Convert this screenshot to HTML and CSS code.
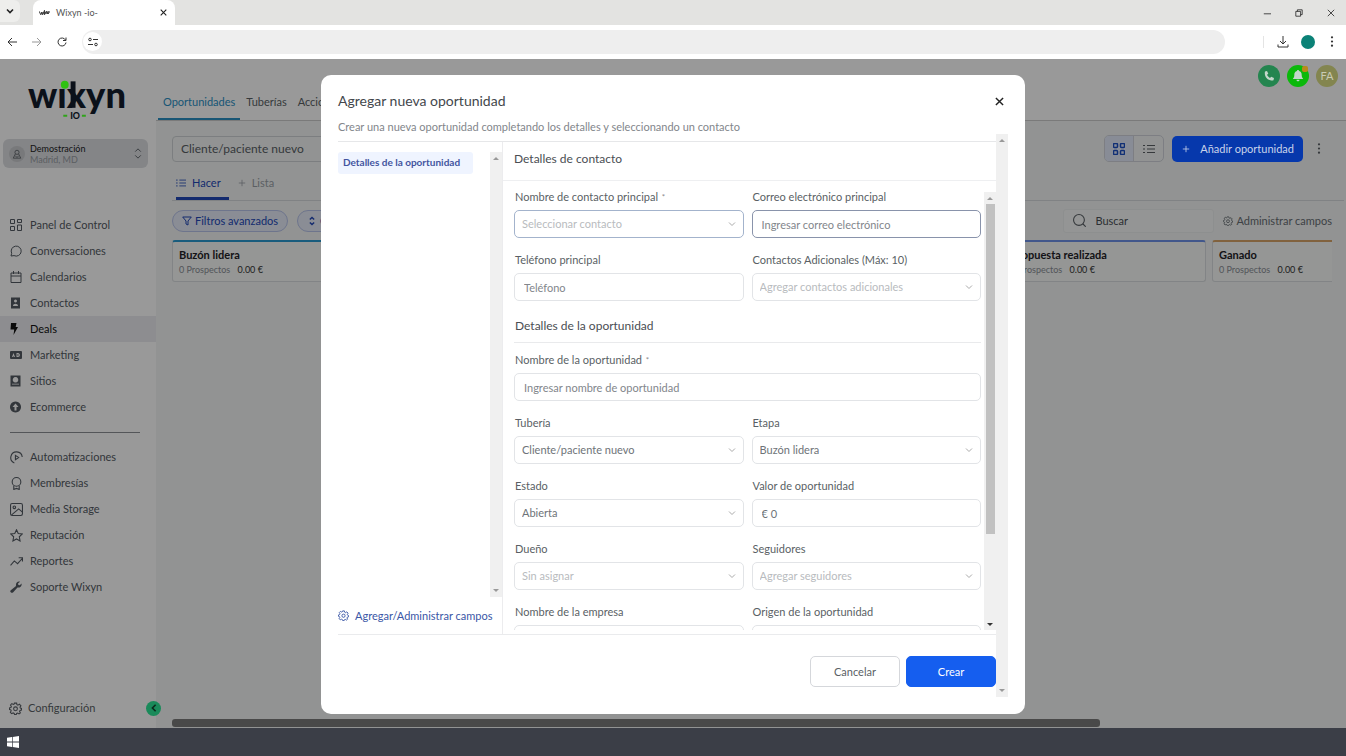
FILE: index.html
```html
<!DOCTYPE html>
<html lang="es">
<head>
<meta charset="utf-8">
<title>Wixyn -io-</title>
<link rel="stylesheet" href="styles.css">
</head>
<body>
<svg class="sprite" aria-hidden="true">
  <symbol id="gear" viewBox="0 0 24 24"><path d="M10 2h4l.7 3 1.8.8L19.200 4 22 7l-1.700 2.500.7 1.800 2 .7v3l-2.700.7-.8 1.800L21 20l-2.500 2-2.700-1.500-1.800.7-.7 2h-3l-.7-2.300-2-.8L5 21.500 2.500 19 4 16.300l-.7-1.800-2.300-.7v-3l2.500-.7.8-1.900L2.800 5.500 5.300 3l2.500 1.500 1.700-.7z"/><circle cx="12" cy="12.500" r="3.500"/></symbol>
  <symbol id="chev" viewBox="0 0 10 10"><path d="M2 3.500l3 3 3-3"/></symbol>
  <symbol id="cross" viewBox="0 0 10 10"><path d="M1 1l8 8M9 1l-8 8"/></symbol>
  <symbol id="plus" viewBox="0 0 10 10"><path d="M5 1v8M1 5h8"/></symbol>
  <symbol id="dots" viewBox="0 0 10 14"><g fill="currentColor" stroke="none"><circle cx="5" cy="2.500" r="1.200"/><circle cx="5" cy="7" r="1.200"/><circle cx="5" cy="11.500" r="1.200"/></g></symbol>
  <symbol id="list" viewBox="0 0 12 12"><path d="M4 2.500h8M4 6h8M4 9.500h8M0 2.500h2M0 6h2M0 9.500h2"/></symbol>
  <symbol id="updown" viewBox="0 0 10 14"><path d="M2 5l3-3 3 3M2 9l3 3 3-3"/></symbol>
</svg>

<header class="tabstrip">
  <button class="tab-search" aria-label="Buscar pestañas"><svg class="ic i10 bold"><use href="#chev"/></svg></button>
  <div class="tab">
    <svg class="favicon" viewBox="0 0 12 8"><path d="M0 2l2 4 1-3 1 3 2-5v5l2-4 1 3 1-3v3l2-3" /><path d="M2 4h8"/></svg>
    <span class="tab-title">Wixyn -io-</span>
    <button class="plain" aria-label="Cerrar pestaña"><svg class="ic i7 bold"><use href="#cross"/></svg></button>
  </div>
  <div class="window-controls">
    <button class="plain" aria-label="Minimizar"><svg class="ic i8" viewBox="0 0 10 10"><path d="M1 6h9"/></svg></button>
    <button class="plain" aria-label="Restaurar"><svg class="ic i8" viewBox="0 0 10 10"><path d="M1 3h6v6H1zM3 3V1h6v6H7"/></svg></button>
    <button class="plain" aria-label="Cerrar"><svg class="ic i8"><use href="#cross"/></svg></button>
  </div>
</header>
<div class="toolbar">
  <button class="plain" aria-label="Atrás"><svg class="ic i10" viewBox="0 0 10 10"><path d="M10 5H1M5 1L1 5l4 4"/></svg></button>
  <button class="plain faded" aria-label="Adelante"><svg class="ic i10" viewBox="0 0 10 10"><path d="M0 5h9M5 1l4 4-4 4"/></svg></button>
  <button class="plain" aria-label="Recargar"><svg class="ic i10" viewBox="0 0 10 10"><path d="M8.500 3A4 4 0 1 0 9 5.500M9 .5V3.500H6"/></svg></button>
  <div class="address">
    <span class="site"><svg class="ic i10" viewBox="0 0 10 10"><circle cx="2" cy="2.500" r="1.300"/><path d="M5 2.500h5M0 7.500h5"/><circle cx="8" cy="7.500" r="1.300"/></svg></span>
    <input class="url" aria-label="Dirección">
  </div>
  <span class="tool-sep"></span>
  <button class="plain" aria-label="Descargas"><svg class="ic i12" viewBox="0 0 12 12"><path d="M6 0v8M3 5l3 3 3-3M1 8.500V11h10V8.500"/></svg></button>
  <span class="profile"></span>
  <button class="plain" aria-label="Menú"><svg class="ic kebab"><use href="#dots"/></svg></button>
</div>

<div class="app">
  <aside class="sidebar">
    <svg class="logo" viewBox="0 0 100 46" role="img" aria-label="wixyn io">
      <text class="logo-word" x="0" y="32">wıxyn</text>
      <path class="logo-stem" d="M46 5v27"/>
      <circle class="logo-dot" cx="37.500" cy="8.500" r="4"/>
      <text class="logo-io" x="43" y="43">IO</text>
      <path class="logo-dash" d="M36 40h4M55 40h4"/>
    </svg>
    <button class="account">
      <span class="account-pin"><svg class="ic i10" viewBox="0 0 12 12"><circle cx="6" cy="4" r="2.500"/><path d="M4 6L1.500 11h9L8 6M4 8.500l2 1.500 2-1.500"/></svg></span>
      <span class="account-text"><span class="account-name">Demostración</span><span class="account-place">Madrid, MD</span></span>
      <svg class="ic kebab"><use href="#updown"/></svg>
    </button>
    <nav class="nav">
      <a href="#"><svg class="ic i12" viewBox="0 0 12 12"><path d="M.5.500h4v4h-4zM7.500.500h4v3h-4zM.5 7.500h4v4h-4zM7.500 6h4v5.500h-4z"/></svg>Panel de Control</a>
      <a href="#"><svg class="ic i12" viewBox="0 0 12 12"><path d="M1 11l.7-2.700A5 5 0 1 1 4 10.600z"/></svg>Conversaciones</a>
      <a href="#"><svg class="ic i12" viewBox="0 0 12 12"><path d="M1 2h10v9.500H1zM1 5h10M3.500 0v3M8.500 0v3"/></svg>Calendarios</a>
      <a href="#"><svg class="ic i12 solid" viewBox="0 0 12 12"><path fill-rule="evenodd" d="M1 .5h9v11H1zM5.500 2.500a1.500 1.500 0 1 0 .01 0zM3 9h5c0-3-5-3-5 0z"/></svg>Contactos</a>
      <a href="#" class="current"><svg class="ic i12 solid" viewBox="0 0 12 12"><path d="M1 0h5.500L5.700 4H8L3.500 12l.7-5.500H.5z"/></svg>Deals</a>
      <a href="#"><svg class="ic i12 solid" viewBox="0 0 12 12"><path fill-rule="evenodd" d="M1 2h10a1 1 0 0 1 1 1v6a1 1 0 0 1-1 1H1a1 1 0 0 1-1-1V3a1 1 0 0 1 1-1zM2 8l1.500-4L5 8H4l-.5-1L3 8zM6.500 4v4H8c2.500 0 2.500-4 0-4zM7.500 5c1.500 0 1.500 2 0 2z"/></svg>Marketing</a>
      <a href="#"><svg class="ic i12 solid" viewBox="0 0 12 12"><path fill-rule="evenodd" d="M.5.500h10v11h-10zM5.500 2a2.800 2.800 0 1 0 .01 0zM2 9.500h7v-.8H2z"/></svg>Sitios</a>
      <a href="#"><svg class="ic i12 solid" viewBox="0 0 12 12"><path fill-rule="evenodd" d="M5.500.500a5.500 5.500 0 1 0 .01 0zM5.500 2.500L8.500 6H6.500v3.500h-2V6h-2z"/></svg>Ecommerce</a>
    </nav>
    <hr class="nav-rule">
    <nav class="nav">
      <a href="#"><svg class="ic i13" viewBox="0 0 12 12"><path d="M4 11A5.300 5.300 0 1 1 11.300 5.500M1 8.500A5 5 0 0 0 4 11M5 4l3 2-3 2z"/></svg>Automatizaciones</a>
      <a href="#"><svg class="ic i13" viewBox="0 0 12 12"><circle cx="6" cy="4.500" r="4"/><path d="M3.500 8v3.500L6 10.500l2.500 1V8"/></svg>Membresías</a>
      <a href="#"><svg class="ic i13" viewBox="0 0 12 12"><rect x=".5" y=".5" width="11" height="11" rx="1.500"/><circle cx="4" cy="4" r="1.200"/><path d="M1.500 11L8 5.500l3.500 3"/></svg>Media Storage</a>
      <a href="#"><svg class="ic i13" viewBox="0 0 12 12"><path d="M6 .7l1.600 3.400 3.800.5-2.800 2.600.7 3.800L6 9.200 2.700 11l.7-3.800L.6 4.600l3.800-.5z"/></svg>Reputación</a>
      <a href="#"><svg class="ic i13" viewBox="0 0 12 12"><path d="M.5 9.500L4 5.500 7 8l4.500-5M8 2.500h3.500V6"/></svg>Reportes</a>
      <a href="#"><svg class="ic i12 solid" viewBox="0 0 12 12"><path d="M.5 9.500L6 5C5.500 2 7.500 0 10 .7L8 2.600l.4 1.300 1.400.3L11.500 2.500C12.200 5 10 7 7.500 6.500L3 11.500C1.500 12.500-.5 11 .5 9.500z"/></svg>Soporte Wixyn</a>
    </nav>
    <footer class="side-foot">
      <a href="#" class="config"><svg class="ic i13"><use href="#gear"/></svg>Configuración</a>
      <button class="collapse" aria-label="Contraer"><svg class="ic i8 bold" viewBox="0 0 10 10"><path d="M7 1L3 5l4 4"/></svg></button>
    </footer>
  </aside>

  <main class="main">
    <div class="topbar">
      <nav class="top-tabs"><a href="#" class="on">Oportunidades</a><a href="#">Tuberías</a><a href="#">Acciones</a></nav>
      <div class="top-icons">
        <button class="round phone" aria-label="Llamar"><svg viewBox="0 0 12 12"><path d="M2 1.500l2-.5 1.300 2.700L4 4.800C4.600 6.200 5.600 7.200 7 8l1.200-1.300L11 8l-.5 2.200C5 11.500.800 6.500 2 1.500z"/></svg></button>
        <button class="round bell" aria-label="Avisos"><svg viewBox="0 0 12 12"><path d="M6 0c.7 0 1 .4 1 1 2 .5 2.700 2 2.700 4 0 2 .5 2.700 1.500 4H.8c1-1.300 1.500-2 1.500-4 0-2 .7-3.500 2.700-4 0-.6.300-1 1-1zM4.500 9.700h3c0 2-3 2-3 0z"/></svg><span class="dot"></span></button>
        <button class="round avatar">FA</button>
      </div>
    </div>
    <div class="content">
      <div class="row actions">
        <select class="pipeline" aria-label="Tubería activa"><option>Cliente/paciente nuevo</option></select>
        <div class="spacer"></div>
        <div class="toggle">
          <button class="seg on" aria-label="Tablero"><svg class="ic i12" viewBox="0 0 12 12"><rect x=".5" y=".5" width="4" height="4" rx="1"/><rect x="7.500" y=".5" width="4" height="4" rx="1"/><rect x=".5" y="7.500" width="4" height="4" rx="1"/><rect x="7.500" y="7.500" width="4" height="4" rx="1"/></svg></button>
          <button class="seg" aria-label="Lista"><svg class="ic i12"><use href="#list"/></svg></button>
        </div>
        <button class="add"><svg class="ic i8"><use href="#plus"/></svg>Añadir oportunidad</button>
        <button class="plain more" aria-label="Más"><svg class="ic kebab"><use href="#dots"/></svg></button>
      </div>
      <div class="row views">
        <a href="#" class="view on"><svg class="ic i10"><use href="#list"/></svg>Hacer</a>
        <a href="#" class="view"><svg class="ic i8"><use href="#plus"/></svg>Lista</a>
      </div>
      <div class="row filters">
        <button class="pill"><svg class="ic i10" viewBox="0 0 10 10"><path d="M.7 1h8.600L6 5v4L4 8V5z"/></svg>Filtros avanzados</button>
        <button class="pill"><svg class="ic i10 heavy"><use href="#updown"/></svg>Ordenar</button>
        <div class="spacer"></div>
        <label class="search"><svg class="ic i13" viewBox="0 0 12 12"><circle cx="5.500" cy="5.500" r="5"/><path d="M9 9l2.800 2.800"/></svg><input type="text" placeholder="Buscar" aria-label="Buscar"></label>
        <button class="plain manage"><svg class="ic i10"><use href="#gear"/></svg>Administrar campos</button>
      </div>
      <div class="board">
        <section class="stage sky"><h3>Buzón lidera</h3><p>0 Prospectos <b>0.00 €</b></p></section>
        <section class="stage sky"></section>
        <section class="stage blue"></section>
        <section class="stage blue"></section>
        <section class="stage blue"><h3>Propuesta realizada</h3><p>0 Prospectos <b>0.00 €</b></p></section>
        <section class="stage orange"><h3>Ganado</h3><p>0 Prospectos <b>0.00 €</b></p></section>
      </div>
      <div class="hbar"><div class="hthumb"></div></div>
    </div>
  </main>

  <div class="overlay">
    <div class="modal" role="dialog" aria-labelledby="dlg-title">
      <div class="modal-head">
        <h1 id="dlg-title">Agregar nueva oportunidad</h1>
        <button class="plain close" aria-label="Cerrar"><svg class="ic i9 bold"><use href="#cross"/></svg></button>
      </div>
      <p class="subtitle">Crear una nueva oportunidad completando los detalles y seleccionando un contacto</p>
      <div class="modal-scroll">
        <div class="modal-main">
          <div class="columns">
            <div class="left">
              <div class="left-top">
                <a href="#" class="section-tab">Detalles de la oportunidad</a>
                <div class="vbar"><i class="up"></i><i class="down"></i></div>
              </div>
              <a href="#" class="fields-link"><svg class="ic i11"><use href="#gear"/></svg>Agregar/Administrar campos</a>
            </div>
            <div class="right">
              <h2>Detalles de contacto</h2>
              <div class="form-wrap">
                <form class="form">
                  <div class="field"><label for="f1">Nombre de contacto principal <sup>*</sup></label><div class="select"><select id="f1" class="empty focus"><option>Seleccionar contacto</option></select><svg class="ic i10"><use href="#chev"/></svg></div></div>
                  <div class="field"><label for="f2">Correo electrónico principal</label><input id="f2" class="focus dark" type="email" placeholder="Ingresar correo electrónico"></div>
                  <div class="field"><label for="f3">Teléfono principal</label><input id="f3" type="tel" placeholder="Teléfono"></div>
                  <div class="field"><label for="f4">Contactos Adicionales (Máx: 10)</label><div class="select"><select id="f4" class="empty"><option>Agregar contactos adicionales</option></select><svg class="ic i10"><use href="#chev"/></svg></div></div>
                  <h3 class="wide">Detalles de la oportunidad</h3>
                  <div class="field wide"><label for="f5">Nombre de la oportunidad <sup>*</sup></label><input id="f5" type="text" placeholder="Ingresar nombre de oportunidad"></div>
                  <div class="field"><label for="f6">Tubería</label><div class="select"><select id="f6"><option>Cliente/paciente nuevo</option></select><svg class="ic i10"><use href="#chev"/></svg></div></div>
                  <div class="field"><label for="f7">Etapa</label><div class="select"><select id="f7"><option>Buzón lidera</option></select><svg class="ic i10"><use href="#chev"/></svg></div></div>
                  <div class="field"><label for="f8">Estado</label><div class="select"><select id="f8"><option>Abierta</option></select><svg class="ic i10"><use href="#chev"/></svg></div></div>
                  <div class="field"><label for="f9">Valor de oportunidad</label><input id="f9" type="text" value="€ 0"></div>
                  <div class="field"><label for="f10">Dueño</label><div class="select"><select id="f10" class="empty"><option>Sin asignar</option></select><svg class="ic i10"><use href="#chev"/></svg></div></div>
                  <div class="field"><label for="f11">Seguidores</label><div class="select"><select id="f11" class="empty"><option>Agregar seguidores</option></select><svg class="ic i10"><use href="#chev"/></svg></div></div>
                  <div class="field"><label for="f12">Nombre de la empresa</label><input id="f12" type="text"></div>
                  <div class="field"><label for="f13">Origen de la oportunidad</label><input id="f13" type="text"></div>
                </form>
                <div class="vbar inner"><i class="up"></i><div class="thumb"></div><i class="down"></i></div>
              </div>
            </div>
          </div>
          <div class="modal-foot">
            <button class="btn">Cancelar</button>
            <button class="btn primary">Crear</button>
          </div>
        </div>
        <div class="vbar"><i class="up"></i><i class="down"></i></div>
      </div>
    </div>
  </div>
</div>

<footer class="taskbar">
  <button class="plain" aria-label="Inicio"><svg class="win" viewBox="0 0 12 12"><path d="M0 1.800l5-.7v4.500H0zM5.700 1L12 0v5.600H5.700zM0 6.400h5v4.500l-5-.7zM5.700 6.400H12V12l-6.300-1z"/></svg></button>
</footer>
</body>
</html>
```

FILE: styles.css
```css
* { box-sizing: border-box; }
body {
  margin: 0;
  height: 100vh;
  display: flex;
  flex-direction: column;
  overflow: hidden;
  font: 11px/16px Lato, "Open Sans", sans-serif;
  color: #5a5f65;
  background: #fff;
}
button, input, select { font: inherit; color: inherit; margin: 0; }
button { cursor: pointer; }
a { color: inherit; text-decoration: none; }
h1, h2, h3, p { margin: 0; font-weight: 400; }
.sprite { display: none; }
.plain { border: 0; background: none; padding: 0; display: flex; align-items: center; }
.ic { fill: none; stroke: currentColor; stroke-width: 1; flex: none; display: block; }
.ic.bold { stroke-width: 1.600; }
.ic.heavy { stroke-width: 2; }
.ic.solid { fill: currentColor; stroke: none; }
.i7 { width: 7px; height: 7px; }
.i8 { width: 8px; height: 8px; }
.i9 { width: 9px; height: 9px; }
.i10 { width: 10px; height: 10px; }
.i11 { width: 11px; height: 11px; }
.i12 { width: 12px; height: 12px; }
.i13 { width: 13px; height: 13px; }
.kebab { width: 10px; height: 13px; }
.spacer { flex: 1; }

/* Browser frame */
.tabstrip { flex: none; height: 25px; display: flex; background: #e3e3e1; color: #222; }
.tab-search { width: 20px; height: 22px; border: 0; border-radius: 0 6px 6px 0; background: #eeeeec; padding: 0 0 0 5px; }
.tab { width: 142px; margin-left: 13px; height: 25px; padding: 0 8px 0 6px; display: flex; align-items: center; gap: 6px; background: #fff; border-radius: 8px 8px 0 0; }
.favicon { width: 11px; height: 8px; fill: none; stroke: #333; }
.tab-title { flex: 1; font-size: 9px; color: #555; }
.window-controls { margin-left: auto; display: flex; gap: 24px; padding-right: 11px; }
.toolbar { flex: none; height: 34px; display: flex; align-items: center; gap: 15px; padding: 0 9px 1px 7px; color: #333; }
.faded { opacity: .5; }
.address { flex: 1; height: 24px; display: flex; align-items: center; border-radius: 12px; background: #eee; padding-left: 1px; }
.site { width: 19px; height: 19px; border-radius: 50%; background: #fff; display: grid; place-items: center; }
.url { flex: 1; border: 0; background: none; outline: 0; }
.tool-sep { width: 1px; height: 12px; background: #e4e4e4; margin: 0 -2px 0 23px; }
.profile { width: 14px; height: 14px; border-radius: 50%; background: #0b8277; margin: 0 -3px; }

/* Application */
.app { flex: 1; min-height: 0; display: flex; position: relative; background: #fff; }
.sidebar { width: 156px; display: flex; flex-direction: column; background: #fff; }
.logo { width: 98px; height: 46px; margin: 17px 0 17px 28px; overflow: visible; position: relative; z-index: 2; }
.logo-word { font: 900 37px Lato, sans-serif; fill: #0b111a; }
.logo-stem { stroke: #0b111a; stroke-width: 5; }
.logo-dot { fill: #2fc212; }
.logo-io { font: 900 9px Lato, sans-serif; fill: #0b111a; }
.logo-dash { stroke: #2fa41a; stroke-width: 2; }
.account { height: 29px; margin: 0 8px 0 3px; padding: 0 5px 0 6px; display: flex; align-items: center; gap: 5px; border: 0; border-radius: 6px; background: #dcdee2; text-align: left; }
.account-pin { width: 16px; height: 16px; border-radius: 50%; background: #c8cacd; display: grid; place-items: center; }
.account-text { flex: 1; display: flex; flex-direction: column; font-size: 9px; line-height: 11px; }
.account-name { color: #222; }
.account-place { color: #999da3; }
.account + .nav { margin-top: 44px; }
.nav { display: flex; flex-direction: column; color: #545b63; }
.nav a { height: 26px; display: flex; align-items: center; padding-left: 30px; }
.nav .ic { margin-left: -20px; margin-right: 8px; }
.nav .i13 { margin-right: 7px; }
.nav .current { background: #ececf0; color: #111; }
.nav-rule { height: 1px; width: 130px; margin: 12px 0 11px 10px; border: 0; background: #8d9095; }
.side-foot { margin-top: auto; padding: 0 0 12px 9px; width: 161px; display: flex; align-items: center; justify-content: space-between; }
.config { display: flex; align-items: center; gap: 6px; }
.side-foot .ic, .manage .ic, .fields-link .ic { stroke-width: 2; }
.collapse { width: 15px; height: 15px; border: 0; border-radius: 50%; padding: 0; display: grid; place-items: center; background: #1a8a5a; color: #0b2a1c; position: relative; z-index: 2; }
.main { flex: 1; min-width: 0; display: flex; flex-direction: column; background: #f3f6f5; }
.topbar { height: 62px; display: flex; justify-content: space-between; background: #fff; border-bottom: 1px solid #ccc; }
.top-tabs { display: flex; align-items: flex-end; margin-left: 2px; }
.top-tabs a { height: 26px; padding: 0 5px; margin-right: 1px; }
.top-tabs .on { color: #2a8fc4; border-bottom: 2px solid #2a8fc4; }
.top-icons { display: flex; gap: 7px; padding: 6px 8px 0 0; position: relative; z-index: 2; align-self: flex-start; }
.round { width: 22px; height: 22px; border: 0; border-radius: 50%; padding: 0; display: grid; place-items: center; color: #c9cbb4; position: relative; }
.round svg { width: 12px; height: 12px; fill: #c3d6ca; }
.phone { background: #24854f; }
.bell { background: #0bb90b; }
.dot { position: absolute; right: 1px; top: 1px; width: 6px; height: 6px; border-radius: 2px; background: #b98a1a; }
.avatar { background: #83854f; }
.content { flex: 1; min-height: 0; display: flex; flex-direction: column; padding: 14px 14px 0 16px; }
.row { display: flex; align-items: center; }
.actions { height: 27px; }
.pipeline { appearance: none; width: 230px; height: 26px; padding: 0 8px; border: 1px solid #cfd2d6; border-radius: 4px; background: transparent; font-size: 12px; }
.toggle { display: flex; height: 27px; border: 1px solid #d0d3da; border-radius: 5px; overflow: hidden; margin-right: 8px; }
.seg { width: 29px; border: 0; background: none; padding: 0; display: grid; place-items: center; }
.seg.on { background: #e3e9fa; color: #1c4fc4; border-right: 1px solid #d0d3da; }
.seg.on .ic { stroke-width: 1.500; }
.add { height: 26px; padding: 0 9px 0 10px; display: flex; align-items: center; gap: 10px; border: 0; border-radius: 5px; background: #0638ac; color: #c9d3ea; position: relative; z-index: 2; }
.more { margin: 0 8px 0 11px; }
.views { height: 39px; margin-right: -12px; border-bottom: 1px solid #d5d9dd; gap: 9px; align-items: flex-end; padding-left: 4px; }
.view { height: 28px; display: flex; align-items: center; gap: 6px; padding-bottom: 6px; color: #999fa6; }
.view.on { color: #2248b8; border-bottom: 3px solid #2248b8; padding-right: 8px; padding-bottom: 3px; }
.filters { height: 39px; gap: 9px; }
.pill { height: 22px; padding: 0 9px; display: flex; align-items: center; gap: 3px; border: 1px solid #b8c3ea; border-radius: 11px; background: #e6ebf8; color: #2248b8; }
.search { width: 151px; height: 24px; padding: 0 9px; display: flex; align-items: center; gap: 9px; background: #f7f9f8; border: 1px solid #eceeef; border-radius: 3px; }
.search input { border: 0; background: none; min-width: 0; flex: 1; padding: 0; outline: 0; }
.search input::placeholder { color: #4a4f55; opacity: 1; }
.manage { gap: 3px; color: #686d73; }
.board { display: flex; gap: 6px; overflow: hidden; flex: 1; align-items: flex-start; }
.stage { flex: none; width: 202px; height: 42px; padding: 5px 6px; border: 1px solid #d9dcdf; border-top: 2px solid; border-radius: 3px; background: #f8faf9; }
.sky { border-top-color: #2a9ad0; }
.blue { border-top-color: #6f92e8; }
.orange { border-top-color: #d8a468; }
.stage h3 { font-size: 11px; font-weight: 700; color: #1e2227; }
.stage p { font-size: 9px; line-height: 14px; color: #8a8f95; }
.stage b { margin-left: 5px; font-weight: 400; color: #333; }
.hbar { height: 9px; padding-bottom: 1px; }
.hthumb { width: 80%; height: 8px; border-radius: 3px; background: #7b7b7b; }

/* Dialog */
.overlay { position: absolute; inset: 0; z-index: 1; display: flex; align-items: stretch; justify-content: center; padding: 16px 0 14px; background: rgba(0, 0, 0, .4); }
.modal { width: 704px; max-width: 90%; display: flex; flex-direction: column; padding: 16px 17px 17px; background: #fff; border-radius: 10px; }
.modal-head { display: flex; align-items: center; justify-content: space-between; height: 20px; }
.modal-head h1 { font-size: 14px; color: #43474c; }
.close { padding: 4px; color: #222; }
.subtitle { height: 23px; padding-top: 8px; color: #82868b; }
.modal-scroll { flex: 1; min-height: 0; display: flex; }
.modal-main { flex: 1; min-width: 0; display: flex; flex-direction: column; padding-top: 7px; }
.columns { flex: 1; min-height: 0; display: flex; border-top: 1px solid #e6e7e9; border-bottom: 1px solid #eaebed; }
.left { width: 165px; display: flex; flex-direction: column; padding-top: 10px; border-right: 1px solid #ececee; }
.left-top { flex: 1; display: flex; justify-content: space-between; }
.section-tab { width: 135px; height: 22px; padding: 0 5px; line-height: 21px; font-size: 10px; font-weight: 700; color: #4354a0; background: #eff4ff; border-radius: 3px; white-space: nowrap; }
.fields-link { height: 37px; display: flex; align-items: center; gap: 6px; color: #3a56a6; white-space: nowrap; }
.vbar { flex: none; width: 12px; display: flex; flex-direction: column; justify-content: space-between; align-items: center; padding: 5px 0; background: #f0f0f0; }
.up, .down { border: 3px solid transparent; }
.up { border-top: 0; border-bottom-color: #999; }
.down { border-bottom: 0; border-top-color: #999; }
.inner .down { border-top-color: #333; }
.right { flex: 1; min-width: 0; display: flex; flex-direction: column; }
.right h2 { height: 39px; padding: 9px 0 0 11px; font-size: 12px; border-bottom: 1px solid #eeeff1; color: #4a4e53; }
.form-wrap { flex: 1; min-height: 0; display: flex; overflow: hidden; margin-bottom: 4px; }
.form { flex: 1; min-width: 0; display: grid; grid-template-columns: 1fr 1fr; gap: 14px 8px; padding: 8px 3px 0 11px; align-content: start; }
.wide { grid-column: 1 / -1; }
.field { display: flex; flex-direction: column; gap: 5px; min-width: 0; }
.field label { padding-left: 1px; white-space: nowrap; }
.field sup { font-size: 8px; line-height: 0; vertical-align: 1px; margin-left: 1px; color: #888; }
.field input, .select select { width: 100%; height: 28px; padding: 0 9px; border: 1px solid #e2e4e7; border-radius: 5px; background: #fff; color: #6e7378; outline: 0; }
.field input::placeholder { color: #82868b; opacity: 1; }
.select { display: grid; align-items: center; }
.select select { appearance: none; grid-area: 1 / 1; padding: 0 7px; }
.select .ic { grid-area: 1 / 1; justify-self: end; margin-right: 7px; color: #aaa; pointer-events: none; }
.select .empty { color: #b8bbbe; }
.field .focus { border-color: #a3b3cc; }
.field .dark { border-color: #8993ab; }
.form h3 { height: 28px; margin-bottom: -5px; padding: 3px 0 0 1px; font-size: 12px; border-bottom: 1px solid #e9eaec; color: #4a4e53; }
.inner { margin-top: 11px; justify-content: flex-start; gap: 4px; padding: 5px 0 4px; }
.thumb { width: 9px; height: 77%; background: #c1c1c1; }
.inner .down { margin-top: auto; }
.modal-foot { height: 62px; display: flex; justify-content: flex-end; align-items: flex-start; gap: 6px; padding-top: 21px; }
.btn { width: 90px; height: 31px; border: 1px solid #d5d7db; border-radius: 5px; background: #fff; padding: 0; }
.primary { background: #155eef; border-color: #155eef; color: #fff; }

.taskbar { flex: none; height: 28px; display: flex; align-items: center; padding-left: 7px; background: #3b3e47; }
.win { width: 12px; height: 12px; fill: #fff; }
```
